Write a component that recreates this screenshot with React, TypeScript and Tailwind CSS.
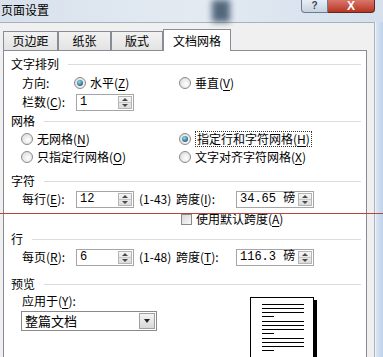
import React from "react";

function U({ c }: { c: string }) {
  return <span className="underline underline-offset-2">{c}</span>;
}

function Radio({ checked }: { checked?: boolean }) {
  return (
    <span className="w-[12px] h-[12px] shrink-0 rounded-full border border-[#8a8a8a] bg-[radial-gradient(circle_at_60%_60%,#ffffff,#d4d4d4)] flex items-center justify-center">
      {checked && (
        <span className="w-[6px] h-[6px] rounded-full bg-[radial-gradient(circle_at_40%_35%,#9ad8ef,#1d5f7c_75%)]" />
      )}
    </span>
  );
}

function Group({ label }: { label: string }) {
  return (
    <div className="flex items-center h-[18px] pl-[7px] pr-[5px]">
      <span>{label}</span>
      <div className="flex-1 h-px bg-[#dcdcdc] ml-[9px]" />
    </div>
  );
}

function Spin({ value, wide }: { value: string; wide?: boolean }) {
  return (
    <div
      className={
        wide
          ? "flex h-[17px] w-[78px] border border-[#a5a5a5] bg-white"
          : "flex h-[17px] w-[58px] border border-[#a5a5a5] bg-white"
      }
    >
      <span className="flex-1 pl-[3px] leading-[15px] font-['Liberation_Mono','Noto_Sans_CJK_SC',monospace] text-[12px]">
        {value}
      </span>
      <div className="w-[14px] my-[1px] mr-[1px] flex flex-col border border-[#b5b5b5] bg-gradient-to-b from-[#f6f6f6] to-[#dcdcdc]">
        <div className="flex-1 flex items-center justify-center border-b border-[#c8c8c8]">
          <span className="w-0 h-0 border-l-[3px] border-r-[3px] border-b-[3px] border-l-transparent border-r-transparent border-b-[#4a4a4a]" />
        </div>
        <div className="flex-1 flex items-center justify-center">
          <span className="w-0 h-0 border-l-[3px] border-r-[3px] border-t-[3px] border-l-transparent border-r-transparent border-t-[#4a4a4a]" />
        </div>
      </div>
    </div>
  );
}

function Tab({ label, w, active }: { label: string; w: string; active?: boolean }) {
  if (active) {
    return (
      <div
        className={`${w} h-[22px] -mb-px bg-white border border-b-0 border-[#898c95] flex items-center justify-center z-10`}
      >
        {label}
      </div>
    );
  }
  return (
    <div
      className={`${w} h-[19px] bg-gradient-to-b from-[#f2f2f2] to-[#e3e3e3] border border-b-0 border-[#898c95] flex items-center justify-center`}
    >
      {label}
    </div>
  );
}

function PageLines() {
  return (
    <div className="flex flex-col gap-[3px]">
      <div className="w-[42px] h-px bg-black" />
      <div className="w-[42px] h-px bg-black" />
      <div className="w-[42px] h-px bg-black" />
      <div className="w-[12px] h-px bg-black" />
    </div>
  );
}

export default function App() {
  return (
    <div className="w-[383px] h-[357px] overflow-hidden relative bg-[#f0f0f0] text-[12px] text-black font-['Noto_Sans_CJK_SC',sans-serif]">
      {/* title bar */}
      <div className="h-[22px] relative bg-gradient-to-r from-[#d8e2ec] via-[#e3eaf2] to-[#d5e0ec] flex items-center">
        <div className="absolute left-[212px] top-0 w-[18px] h-[22px] bg-[#445a70] blur-[3px] opacity-90" />
        <span className="relative pl-[1px] pb-[3px] text-[12px]">页面设置</span>
        <div className="absolute right-[8px] top-0 flex">
          <div className="w-[27px] h-[13px] rounded-bl-[4px] border border-t-0 border-[#6c7a8c] bg-gradient-to-b from-[#e8eef5] to-[#c6d2df] flex items-center justify-center text-[10px] leading-none text-[#3b4a5c] font-['Liberation_Sans',sans-serif] font-bold">
            ?
          </div>
          <div className="w-[47px] h-[13px] rounded-br-[4px] border border-t-0 border-l-0 border-[#5a2a24] bg-gradient-to-b from-[#d9776a] to-[#b6321f] flex items-center justify-center text-[12px] leading-none text-white font-['Liberation_Sans',sans-serif] font-bold">
            X
          </div>
        </div>
      </div>

      <div className="flex h-[335px]">
        {/* client area */}
        <div className="w-[375px] border-t border-r border-[#a8b2be] pl-[3px] pt-[6px]">
          <div className="flex items-end h-[21px]">
            <Tab label="页边距" w="w-[55px]" />
            <Tab label="纸张" w="w-[53px]" />
            <Tab label="版式" w="w-[52px]" />
            <Tab label="文档网格" w="w-[68px]" active />
          </div>
          <div className="w-[364px] h-[320px] bg-white border border-[#898c95] pt-[4px]">
            <Group label="文字排列" />
            <div className="flex items-center h-[19px] pl-[18px]">
              <span className="w-[52px]">方向:</span>
              <div className="w-[105px] flex items-center gap-[4px]">
                <Radio checked />
                <span>
                  水平(<U c="Z" />)
                </span>
              </div>
              <div className="flex items-center gap-[4px]">
                <Radio />
                <span>
                  垂直(<U c="V" />)
                </span>
              </div>
            </div>
            <div className="flex items-center h-[20px] pl-[18px]">
              <span className="w-[54px]">
                栏数(<U c="C" />):
              </span>
              <Spin value="1" />
            </div>
            <Group label="网格" />
            <div className="flex items-center h-[18px] pl-[17px]">
              <div className="w-[158px] flex items-center gap-[4px]">
                <Radio />
                <span>
                  无网格(<U c="N" />)
                </span>
              </div>
              <div className="flex items-center gap-[4px]">
                <Radio checked />
                <span className="border border-dotted border-[#333] px-[1px] leading-[14px]">
                  指定行和字符网格(<U c="H" />)
                </span>
              </div>
            </div>
            <div className="flex items-center h-[18px] pl-[17px]">
              <div className="w-[158px] flex items-center gap-[4px]">
                <Radio />
                <span>
                  只指定行网格(<U c="O" />)
                </span>
              </div>
              <div className="flex items-center gap-[4px]">
                <Radio />
                <span>
                  文字对齐字符网格(<U c="X" />)
                </span>
              </div>
            </div>
            <div className="h-[6px]" />
            <Group label="字符" />
            <div className="flex items-center h-[18px] pl-[18px]">
              <span className="w-[54px]">
                每行(<U c="E" />):
              </span>
              <Spin value="12" />
              <span className="w-[42px] pl-[5px]">(1-43)</span>
              <span className="w-[60px]">
                跨度(<U c="I" />):
              </span>
              <Spin value="34.65 磅" wide />
            </div>
            <div className="flex items-center h-[22px] pl-[177px] gap-[4px]">
              <span className="w-[11px] h-[11px] border border-[#8a8a8a] bg-gradient-to-br from-[#d8d8d8] to-[#f8f8f8]" />
              <span>
                使用默认跨度(<U c="A" />)
              </span>
            </div>
            <Group label="行" />
            <div className="flex items-center h-[18px] pl-[18px]">
              <span className="w-[54px]">
                每页(<U c="R" />):
              </span>
              <Spin value="6" />
              <span className="w-[42px] pl-[5px]">(1-48)</span>
              <span className="w-[60px]">
                跨度(<U c="T" />):
              </span>
              <Spin value="116.3 磅" wide />
            </div>
            <div className="h-[9px]" />
            <Group label="预览" />
            <div className="flex">
              <div className="w-[246px] pl-[17px]">
                <div className="h-[16px] flex items-center pl-[1px]">
                  应用于(<U c="Y" />):
                </div>
                <div className="mt-[2px] w-[136px] h-[20px] border border-[#8a8a8a] bg-white flex">
                  <span className="flex-1 pl-[3px] leading-[18px] text-[13px]">整篇文档</span>
                  <div className="w-[16px] m-[1px] border border-[#a0a0a0] bg-gradient-to-b from-[#f4f4f4] to-[#d8d8d8] flex items-center justify-center">
                    <span className="w-0 h-0 border-l-[3px] border-r-[3px] border-t-[4px] border-l-transparent border-r-transparent border-t-[#222]" />
                  </div>
                </div>
              </div>
              <div className="mt-[4px] w-[64px] h-[80px] border border-black bg-white shadow-[3px_3px_0_#000] pl-[11px] pt-[6px] flex flex-col gap-[4px]">
                <PageLines />
                <PageLines />
                <PageLines />
              </div>
            </div>
          </div>
        </div>
        {/* window frame */}
        <div className="flex-1 bg-gradient-to-r from-[#dbe6f2] to-[#bcd2ea] border-l border-[#eef3f9]" />
      </div>

      {/* red annotation line */}
      <div className="absolute left-0 top-[213px] w-[383px] h-px bg-[#b5473a]" />
    </div>
  );
}
